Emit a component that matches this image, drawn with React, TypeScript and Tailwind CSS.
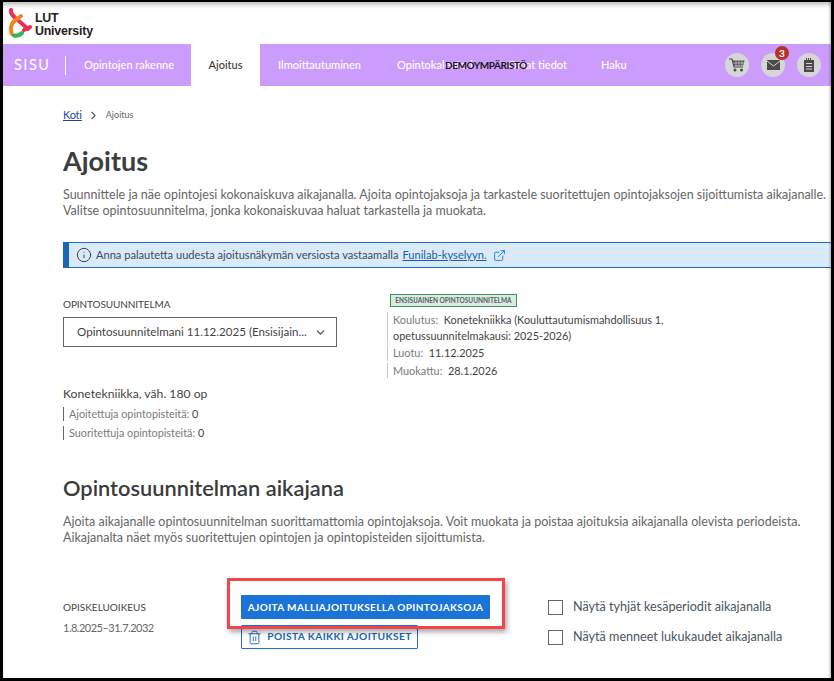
import { ChevronDown, ChevronRight, ExternalLink, Info, Trash2 } from 'lucide-react';

const navItems = [
  { label: 'Ilmoittautuminen', width: 'w-[84px]' },
  { label: 'Opintokalenteri', width: 'w-[76px]' },
  { label: 'Omat tiedot', width: 'w-[58px]' },
  { label: 'Haku', width: 'w-[25px]' },
];

function LutLogo() {
  return (
    <svg width="24" height="30" viewBox="0 0 24 30" fill="none" strokeWidth="4" strokeLinecap="round">
      <path d="M3 2 C2 6 6 9 11 13 L20 21" stroke="#e8314f" />
      <path d="M13 8 C8 12 3 14 3 20 C3 23 3 25 4 26" stroke="#f58220" />
      <path d="M6 27.5 C9 28 12 27 14 25" stroke="#2fb457" />
      <path d="M16 22 L22 19" stroke="#e8314f" />
    </svg>
  );
}

function CartIcon() {
  return (
    <svg width="16" height="14" viewBox="0 0 16 14" fill="none" stroke="#4a4a4a">
      <path d="M0 1h3l2 8h9" strokeWidth="1.2" />
      <path d="M3.5 2.5H15.5L14.2 7.5H4.6z" fill="#4a4a4a" stroke="none" />
      <path d="M7 2.5v5M10 2.5v5M13 2.5v5M4 5h11" stroke="#d6d6d6" strokeWidth="0.7" />
      <circle cx="6" cy="12" r="1.5" fill="#4a4a4a" stroke="none" />
      <circle cx="12.5" cy="12" r="1.5" fill="#4a4a4a" stroke="none" />
    </svg>
  );
}

function MailIcon() {
  return (
    <svg width="13" height="10" viewBox="0 0 13 10">
      <rect width="13" height="10" fill="#4a4a4a" />
      <path d="M0 1l6.5 5L13 1" fill="none" stroke="#d6d6d6" strokeWidth="1" />
    </svg>
  );
}

function NoteIcon() {
  return (
    <svg width="12" height="14" viewBox="0 0 12 14" fill="#4a4a4a">
      <path d="M1 2h2V0h1v2h1V0h1v2h1V0h1v2h3v12H1z" />
      <path d="M3 5h6v1H3zM3 8h6v1H3zM3 10.5h6v1H3z" fill="#d4d4d4" />
    </svg>
  );
}

function NavIcon({ children, badge }: { children: React.ReactNode; badge?: string }) {
  return (
    <div className="relative flex h-6 w-6 items-center justify-center rounded-full bg-[#d6d6d6]">
      {children}
      {badge && (
        <span className="absolute -top-[7px] left-[14px] flex h-[14px] w-[14px] items-center justify-center rounded-full bg-[#b3322a] text-[10px] font-bold text-white">
          {badge}
        </span>
      )}
    </div>
  );
}

function MetaLine({ children }: { children: React.ReactNode }) {
  return <div className="border-l border-[#c8c8c8] pl-[5px] text-[10.9px] leading-[15.5px] text-[#7a7a7a]">{children}</div>;
}

export default function App() {
  return (
    <div className="h-[681px] w-[834px] overflow-hidden bg-black pt-[2px] pr-[3px] pb-[3px] pl-[3px]">
      <div className="relative h-full overflow-hidden bg-white font-['Lato',sans-serif] text-[#3a3a3a] shadow-[inset_0_5px_4px_-2px_rgba(0,0,0,0.25)]">
        {/* logo row */}
        <div className="flex h-[42px] items-center gap-[3px] pl-[5px]">
          <LutLogo />
          <div className="mt-[4px] font-['Liberation_Sans',sans-serif] text-[12.4px] leading-[13px] font-bold tracking-[-0.2px] text-[#222]">
            LUT
            <br />
            University
          </div>
        </div>

        {/* nav */}
        <div className="relative flex h-[42px] items-center bg-[#cc9cfd]">
          <div className="ml-[11px] w-[34px] text-[14.5px] tracking-[1.5px] whitespace-nowrap text-white">SISU</div>
          <div className="mr-[18px] ml-[17px] h-[19px] w-px bg-white" />
          <div className="flex h-full items-center text-[11px] font-medium whitespace-nowrap text-white">
            <div className="w-[89px]">Opintojen rakenne</div>
            <div className="mx-[18px] flex h-full w-[69px] items-center justify-center bg-white text-[#3a3a3a]">Ajoitus</div>
            <div className="flex gap-[35px]">
              {navItems.map((item) => (
                <div key={item.label} className={item.width}>{item.label}</div>
              ))}
            </div>
          </div>
          <div className="absolute top-[14px] left-[442px] text-[10px] leading-[14px] font-bold tracking-[-0.45px] text-[#1c1420]">DEMOYMPÄRISTÖ</div>
          <div className="ml-auto flex gap-3 pr-[10px]">
            <NavIcon><CartIcon /></NavIcon>
            <NavIcon badge="3"><MailIcon /></NavIcon>
            <NavIcon><NoteIcon /></NavIcon>
          </div>
        </div>

        <div className="w-[900px] pt-[21px] pl-[60px]">
          {/* breadcrumb */}
          <div className="flex h-[16px] items-center">
            <a className="text-[11px] tracking-[-0.2px] text-[#2a3f9d] underline">Koti</a>
            <ChevronRight size={13} className="mr-[6px] ml-[5px] text-[#555]" />
            <span className="text-[9px] text-[#666]">Ajoitus</span>
          </div>

          <h1 className="mt-[20px] text-[27px] leading-[36px] font-bold text-[#3d3d3d]">Ajoitus</h1>
          <p className="mt-[8px] text-[12.5px] leading-[16px] text-[#666]">
            Suunnittele ja näe opintojesi kokonaiskuva aikajanalla. Ajoita opintojaksoja ja tarkastele suoritettujen opintojaksojen sijoittumista aikajanalle.
            <br />
            Valitse opintosuunnitelma, jonka kokonaiskuvaa haluat tarkastella ja muokata.
          </p>

          {/* info banner */}
          <div className="mt-[23px] flex h-[26px] items-center border-y border-r border-[#1d6fc4] border-l-[6px] border-l-[#1a66b8] bg-[#d9ebfb] pl-[7px] text-[11.1px] text-[#3f4a55]">
            <Info size={16} strokeWidth={1.5} className="mr-[4px] text-[#444]" />
            <span>Anna palautetta uudesta ajoitusnäkymän versiosta vastaamalla</span>
            <a className="ml-[4px] text-[#1a5fa8] underline">Funilab-kyselyyn.</a>
            <ExternalLink size={13} strokeWidth={1.5} className="ml-[6px] text-[#1a66b8]" />
          </div>

          {/* plan */}
          <div className="mt-[24px] flex">
            <div className="w-[324px]">
              <div className="mt-[5px] text-[10px] leading-[14px] tracking-[-0.1px] text-[#444]">OPINTOSUUNNITELMA</div>
              <div className="mt-[6px] flex h-[30px] w-[274px] items-center justify-between border border-[#666] pr-[9px] pl-[13px] text-[11.6px] text-[#444]">
                <span className="whitespace-nowrap">Opintosuunnitelmani 11.12.2025 (Ensisijain...</span>
                <ChevronDown size={13} className="shrink-0 text-[#444]" />
              </div>
            </div>
            <div className="w-[450px]">
              <div className="mt-[2px] ml-[3px] flex h-[13px] w-[127px] items-center justify-center border border-[#2e9a5f] bg-[#dcebe0] text-[6.5px] font-bold whitespace-nowrap text-[#55606a]">
                ENSISIJAINEN OPINTOSUUNNITELMA
              </div>
              <div className="mt-[5px] flex flex-col gap-[2px]">
                <MetaLine>
                  Koulutus:&nbsp; <span className="text-[#444]">Konetekniikka (Kouluttautumismahdollisuus 1,</span>
                  <br />
                  <span className="text-[#444]">opetussuunnitelmakausi: 2025-2026)</span>
                </MetaLine>
                <MetaLine>Luotu:&nbsp; <span className="text-[#444]">11.12.2025</span></MetaLine>
                <MetaLine>Muokattu:&nbsp; <span className="text-[#444]">28.1.2026</span></MetaLine>
              </div>
            </div>
          </div>

          <div className="mt-[7px] text-[12.2px] leading-[18px] text-[#444]">Konetekniikka, väh. 180 op</div>
          <div className="mt-[4px] flex flex-col gap-[5px] text-[10.8px] leading-[14px] text-[#7a7a7a]">
            <div className="border-l border-[#666] pl-[5px]">Ajoitettuja opintopisteitä: <span className="text-[#444]">0</span></div>
            <div className="border-l border-[#666] pl-[5px]">Suoritettuja opintopisteitä: <span className="text-[#444]">0</span></div>
          </div>

          <h2 className="mt-[34px] text-[21.8px] leading-[28px] font-semibold text-[#3a3a3a]">Opintosuunnitelman aikajana</h2>
          <p className="mt-[12px] text-[12.5px] leading-[16px] text-[#666]">
            Ajoita aikajanalle opintosuunnitelman suorittamattomia opintojaksoja. Voit muokata ja poistaa ajoituksia aikajanalla olevista periodeista.
            <br />
            Aikajanalta näet myös suoritettujen opintojen ja opintopisteiden sijoittumista.
          </p>

          {/* actions */}
          <div className="mt-[49px] flex">
            <div className="w-[178px] pt-[5px]">
              <div className="text-[10px] leading-[14px] text-[#444]">OPISKELUOIKEUS</div>
              <div className="mt-[6px] text-[11px] leading-[16px] tracking-[-0.5px] text-[#666]">1.8.2025–31.7.2032</div>
            </div>
            <div className="flex w-[307px] flex-col items-start gap-[6px]">
              <button className="flex h-[24px] w-[249px] items-center justify-center rounded-[1px] bg-[#1a73d6] text-[10px] font-bold tracking-[0.4px] whitespace-nowrap text-white">
                AJOITA MALLIAJOITUKSELLA OPINTOJAKSOJA
              </button>
              <button className="flex h-[24px] w-[177px] items-center justify-center gap-[5px] rounded-[1px] border border-[#1a73d6] text-[10.2px] font-bold tracking-[0.4px] whitespace-nowrap text-[#1a66b8]">
                <Trash2 size={15} strokeWidth={1.5} className="shrink-0" />
                POISTA KAIKKI AJOITUKSET
              </button>
            </div>
            <div className="flex flex-col gap-[15px] pt-[5px] text-[12.6px] text-[#4a5560]">
              <label className="flex h-[15px] items-center gap-[10px] whitespace-nowrap"><span className="h-[15px] w-[15px] border border-[#666]" />Näytä tyhjät kesäperiodit aikajanalla</label>
              <label className="flex h-[15px] items-center gap-[10px] whitespace-nowrap"><span className="h-[15px] w-[15px] border border-[#666]" />Näytä menneet lukukaudet aikajanalla</label>
            </div>
          </div>
        </div>

        {/* annotation */}
        <div className="absolute top-[576px] left-[224px] h-[51px] w-[278px] border-[3px] border-[#f4444a] shadow-[2px_3px_5px_rgba(0,0,0,0.35)]" />
        {/* right edge shadow */}
        <div className="pointer-events-none absolute top-0 right-0 h-full w-[3px] bg-gradient-to-r from-transparent to-black/20" />
      </div>
    </div>
  );
}
